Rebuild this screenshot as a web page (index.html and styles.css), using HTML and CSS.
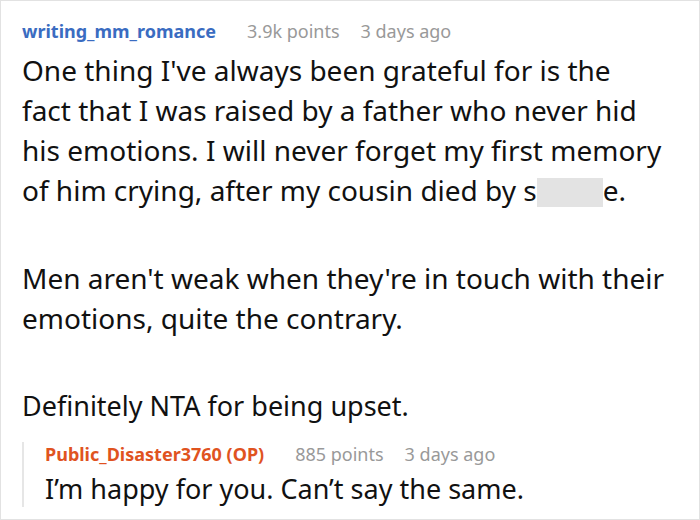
FILE: index.html
```html
<!DOCTYPE html>
<html>
<head>
<meta charset="utf-8">
<link rel="stylesheet" href="styles.css">
</head>
<body>
<div class="card">
  <div class="meta">
    <span class="user">writing_mm_romance</span>
    <span class="info">3.9k points</span>
    <span class="info">3 days ago</span>
  </div>
  <div class="body">
    <p class="para tall">One thing I've always been grateful for is the<br>fact that I was raised by a father who never hid<br>his emotions. I will never forget my first memory<br>of him crying, after my cousin died by s<span class="redact"></span>e.</p>
    <p class="para tall">Men aren't weak when they're in touch with their<br>emotions, quite the contrary.</p>
    <p class="para last">Definitely NTA for being upset.</p>
  </div>
  <div class="reply">
    <div class="meta">
      <span class="user op">Public_Disaster3760 (OP)</span>
      <span class="info">885 points</span>
      <span class="info">3 days ago</span>
    </div>
    <p class="reply-text">I’m happy for you. Can’t say the same.</p>
  </div>
</div>
</body>
</html>
```
FILE: styles.css
```css
html, body {
  margin: 0;
  padding: 0;
  background: #fff;
}
.card {
  width: 700px;
  height: 520px;
  box-sizing: border-box;
  border: 1px solid #e2e2e2;
  padding: 18px 20px 0 21px;
  font-family: "Noto Sans", "Open Sans", sans-serif;
  color: #111;
  overflow: hidden;
}
.meta {
  display: flex;
  align-items: baseline;
  gap: 21px;
  font-size: 18px;
  line-height: 24px;
  white-space: nowrap;
}
.user {
  font-weight: bold;
  color: #3a6cc1;
  margin-right: 10px;
}
.user.op {
  color: #e0531f;
}
.info {
  color: #999;
}
.body {
  margin-top: 7px;
}
.para {
  margin: 0 0 48px 0;
  font-size: 27px;
  line-height: 40px;
  white-space: nowrap;
}
.para.tall {
  font-size: 28px;
}
.para.last {
  margin-bottom: 0;
}
.redact {
  display: inline-block;
  width: 66px;
  height: 29px;
  background: #e3e3e3;
  vertical-align: -6px;
}
.reply {
  border-left: 2px solid #e6e6e6;
  padding-left: 21px;
  margin-top: 25px;
}
.reply .meta {
  margin-top: -9px;
}
.reply-text {
  margin: 5px 0 0 0;
  font-size: 27px;
  line-height: 36px;
  white-space: nowrap;
}
```
